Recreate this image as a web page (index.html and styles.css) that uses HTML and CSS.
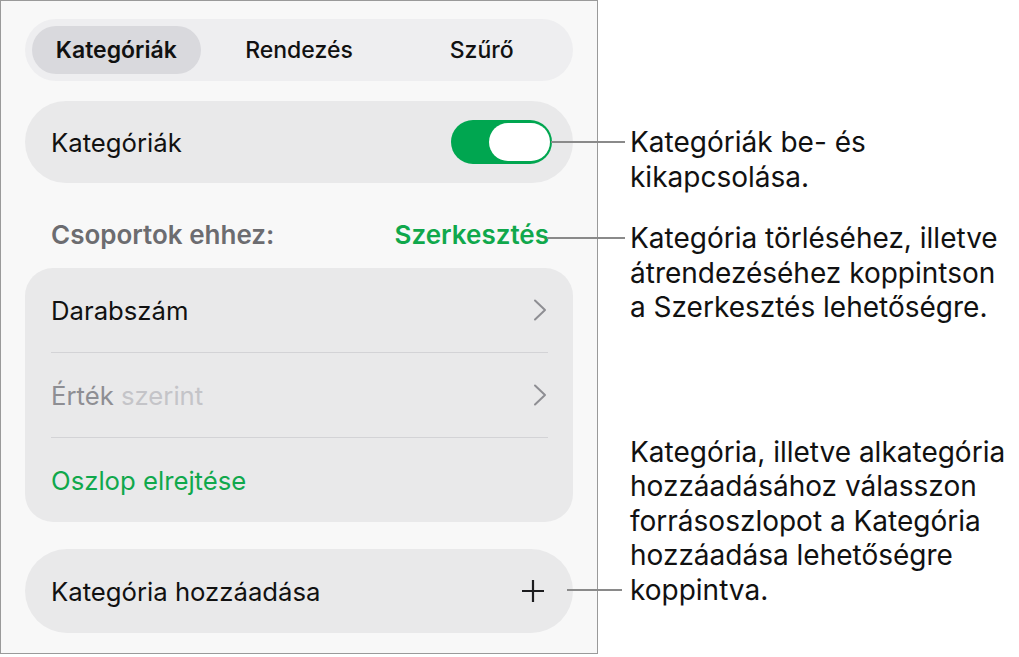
FILE: index.html
```html
<!DOCTYPE html>
<html lang="hu">
<head>
<meta charset="utf-8">
<title>Kategóriák</title>
<link rel="stylesheet" href="styles.css">
</head>
<body>
<div class="page">
  <div class="panel">
    <div class="segmented">
      <div class="seg seg-active"><span class="seg-pill">Kategóriák</span></div>
      <div class="seg">Rendezés</div>
      <div class="seg">Szűrő</div>
    </div>

    <div class="card toggle-card">
      <span class="label">Kategóriák</span>
      <div class="switch"><div class="knob"></div></div>
    </div>

    <div class="section-head">
      <span class="section-title">Csoportok ehhez:</span>
      <span class="section-action">Szerkesztés</span>
    </div>

    <div class="card list">
      <div class="row">
        <span class="label">Darabszám</span>
        <svg class="chevron" width="14" height="22" viewBox="0 0 14 22"><path d="M2 1.5 L12 11 L2 20.5" fill="none" stroke="#8e8e93" stroke-width="2" stroke-linecap="round" stroke-linejoin="round"/></svg>
      </div>
      <div class="row">
        <span class="label label-dim">Érték <span class="label-faint">szerint</span></span>
        <svg class="chevron" width="14" height="22" viewBox="0 0 14 22"><path d="M2 1.5 L12 11 L2 20.5" fill="none" stroke="#8e8e93" stroke-width="2" stroke-linecap="round" stroke-linejoin="round"/></svg>
      </div>
      <div class="row">
        <span class="label label-green">Oszlop elrejtése</span>
      </div>
    </div>

    <div class="card add-card">
      <span class="label">Kategória hozzáadása</span>
      <svg class="plus" width="22" height="22" viewBox="0 0 22 22"><path d="M11 0 V22 M0 11 H22" fill="none" stroke="#1c1c1e" stroke-width="2.2"/></svg>
    </div>
  </div>

  <div class="notes">
    <p class="note note-toggle">Kategóriák be- és<br>kikapcsolása.</p>
    <p class="note note-edit">Kategória törléséhez, illetve<br>átrendezéséhez koppintson<br>a Szerkesztés lehetőségre.</p>
    <p class="note note-add">Kategória, illetve alkategória<br>hozzáadásához válasszon<br>forrásoszlopot a Kategória<br>hozzáadása lehetőségre<br>koppintva.</p>
  </div>
</div>
</body>
</html>
```

FILE: styles.css
```css
* {
  box-sizing: border-box;
}

body {
  margin: 0;
  background: #ffffff;
  font-family: Inter, "Liberation Sans", sans-serif;
  color: #111111;
}

.page {
  display: flex;
  align-items: flex-start;
}

/* Settings panel */
.panel {
  width: 598px;
  height: 654px;
  flex: none;
  background: #f8f8f8;
  border: 1px solid #9a9a9a;
  padding: 18px 24px 0 24px;
  display: flex;
  flex-direction: column;
}

.segmented {
  height: 62px;
  border-radius: 31px;
  background: #eeeef0;
  display: grid;
  grid-template-columns: repeat(3, 1fr);
  align-items: center;
  font-size: 23px;
  font-weight: 500;
}

.seg {
  display: flex;
  justify-content: center;
  align-items: center;
  height: 100%;
}

.seg-active {
  padding: 7px;
}

.seg-pill {
  flex: 1;
  height: 100%;
  border-radius: 24px;
  background: #d9d9dd;
  display: flex;
  justify-content: center;
  align-items: center;
  font-weight: 600;
}

.card {
  background: #e9e9ea;
  border-radius: 28px;
}

.label {
  font-size: 25.7px;
  color: #111111;
}

.toggle-card {
  margin-top: 20px;
  height: 82px;
  border-radius: 41px;
  display: flex;
  align-items: center;
  justify-content: space-between;
  padding: 0 21px 0 26px;
}

.switch {
  width: 101px;
  height: 44px;
  border-radius: 22px;
  background: #00a650;
  display: flex;
  justify-content: flex-end;
  align-items: center;
  padding: 0 2px;
}

.knob {
  width: 61px;
  height: 38px;
  border-radius: 19px;
  background: #ffffff;
}

.section-head {
  height: 85px;
  display: flex;
  align-items: center;
  justify-content: space-between;
  padding: 18px 24px 0 26px;
  font-size: 26px;
  font-weight: 600;
}

.section-title {
  color: #6c6c70;
}

.section-action {
  color: #10a84c;
}

.list {
  display: flex;
  flex-direction: column;
  padding: 0 25px 0 26px;
}

.row {
  height: 84px;
  display: flex;
  align-items: center;
  justify-content: space-between;
  padding-right: 1px;
}

.row + .row {
  border-top: 1px solid #d3d3d6;
  height: 85px;
}

.label-dim {
  color: #8e8e93;
}

.label-faint {
  color: #c4c4c8;
}

.label-green {
  color: #10a84c;
}

.add-card {
  margin-top: 27px;
  height: 84px;
  border-radius: 42px;
  display: flex;
  align-items: center;
  justify-content: space-between;
  padding: 0 29px 0 26px;
}

/* Callouts with their leader lines */
.notes {
  display: flex;
  flex-direction: column;
  padding: 125px 0 0 32px;
}

.note {
  position: relative;
  margin: 0;
  font-size: 28px;
  line-height: 34.5px;
  color: #111111;
  white-space: nowrap;
}

.note::before {
  content: "";
  position: absolute;
  right: calc(100% + 5px);
  height: 2px;
  background: #8a8a8a;
}

.note-toggle::before {
  top: 16px;
  width: 74px;
}

.note-edit {
  margin-top: 27px;
}

.note-edit::before {
  top: 16px;
  width: 78px;
}

.note-add {
  margin-top: 110px;
}

.note-add::before {
  bottom: 16px;
  width: 55px;
  right: calc(100% + 8px);
}
```
